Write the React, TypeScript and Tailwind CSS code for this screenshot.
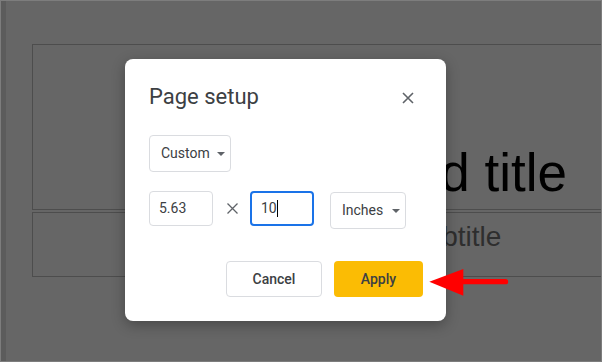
import React from "react";

function Caret() {
  return <span className="inline-block w-0 h-0 border-l-[4px] border-r-[4px] border-t-[4px] border-l-transparent border-r-transparent border-t-[#5f6368]" />;
}

export default function App() {
  return (
    <div className="w-[602px] h-[362px] relative overflow-hidden bg-[#666666] border border-[#7d7d7d] flex">
      <div className="w-[5px] shrink-0 self-stretch bg-[#5c5c5c]" />
      <div className="flex-1 pl-[26px] pt-[43px] flex flex-col gap-[2px] min-w-0" style={{ fontFamily: '"Liberation Sans", Arial, sans-serif' }}>
        <div className="w-[696px] h-[166px] shrink-0 border border-[#4d4d4d] pt-[101px] text-center text-[53px] leading-none text-black whitespace-nowrap">
          Click to add title
        </div>
        <div className="w-[696px] h-[65px] shrink-0 border border-[#4d4d4d] pt-[10px] text-center text-[28px] leading-none text-[#2e2e2e] whitespace-nowrap">
          Click to add subtitle
        </div>
      </div>

      <div
        className="absolute left-[124px] top-[58px] w-[321px] h-[262px] bg-white rounded-[8px] shadow-[0_4px_14px_rgba(0,0,0,0.3)] pl-6 pr-[23px] pt-6 pb-6 flex flex-col text-[#3c4043]"
        style={{ fontFamily: 'Roboto, "Noto Sans", sans-serif' }}
      >
        <div className="flex items-center justify-between h-[28px]">
          <span className="text-[22px] leading-[28px] text-[#3c4043]">Page setup</span>
          <svg width="12" height="12" viewBox="0 0 12 12" className="mr-[9px] mt-[2px]">
            <path d="M1 1 L11 11 M11 1 L1 11" stroke="#5f6368" strokeWidth="1.6" />
          </svg>
        </div>

        <div className="mt-6 w-[82px] h-[37px] border border-[#dadce0] rounded-[4px] flex items-center pl-[11px] text-[14px]">
          <span>Custom</span>
          <span className="ml-[7px] flex"><Caret /></span>
        </div>

        <div className="mt-[19px] flex items-start text-[14px]">
          <div className="w-[64px] h-[35px] border border-[#dadce0] rounded-[4px] flex items-center pl-[9px]">5.63</div>
          <svg width="11" height="11" viewBox="0 0 11 11" className="ml-[14px] mt-[12px]">
            <path d="M0.5 0.5 L10.5 10.5 M10.5 0.5 L0.5 10.5" stroke="#5f6368" strokeWidth="1.3" />
          </svg>
          <div className="ml-[12px] w-[64px] h-[35px] border-2 border-[#1a73e8] rounded-[4px] flex items-center pl-[9px]">
            <span>10</span>
            <span className="w-px h-[17px] bg-black" />
          </div>
          <div className="ml-[16px] mt-px w-[76px] h-[37px] border border-[#dadce0] rounded-[4px] flex items-center pl-[11px]">
            <span>Inches</span>
            <span className="ml-[9px] flex"><Caret /></span>
          </div>
        </div>

        <div className="mt-auto flex justify-end gap-3">
          <button className="w-[96px] h-[36px] border border-[#dadce0] rounded-[4px] bg-white text-[14px] font-medium text-[#3c4043]">
            Cancel
          </button>
          <button className="w-[89px] h-[36px] rounded-[4px] bg-[#fbbc04] text-[14px] font-medium text-[#3c4043]">
            Apply
          </button>
        </div>
      </div>

      <svg width="84" height="32" viewBox="0 0 84 32" className="absolute left-[427px] top-[266px]">
        <polygon points="1.3,14.7 35.3,2 35.3,28.7" fill="#ff0000" />
        <line x1="34" y1="14.7" x2="77.5" y2="14.7" stroke="#ff0000" strokeWidth="5.3" strokeLinecap="round" />
      </svg>
    </div>
  );
}
